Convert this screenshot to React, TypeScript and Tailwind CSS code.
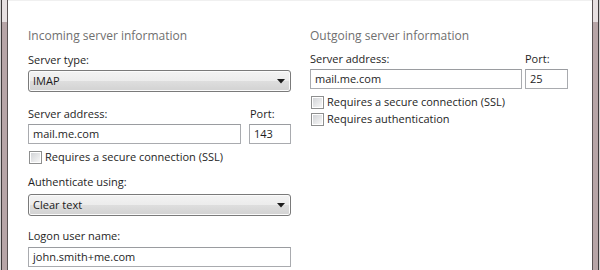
import React from "react";

const font = { fontFamily: '"Open Sans", "Noto Sans", sans-serif' };

function FrameLeft() {
  return (
    <div className="flex h-full w-[8px] shrink-0">
      <div className="w-[1px] h-full bg-[#d2d0d0]" />
      <div className="w-[1px] h-full bg-[#3f3a3b]" />
      <div className="w-[5px] h-full flex flex-col">
        <div className="h-[22px] bg-[#e7e0e1]" />
        <div className="flex-1 bg-[#b7a5a7]" />
      </div>
      <div className="w-[1px] h-full bg-[#5a5253]" />
    </div>
  );
}

function FrameRight() {
  return (
    <div className="flex h-full w-[8px] shrink-0">
      <div className="w-[1px] h-full bg-[#5a5253]" />
      <div className="w-[5px] h-full flex flex-col">
        <div className="h-[22px] bg-[#e7e0e1]" />
        <div className="flex-1 bg-[#b7a5a7]" />
      </div>
      <div className="w-[1px] h-full bg-[#3f3a3b]" />
      <div className="w-[1px] h-full bg-[#d2d0d0]" />
    </div>
  );
}

function Label({ children, className = "" }: { children: React.ReactNode; className?: string }) {
  return (
    <div className={`h-[16px] leading-[16px] text-[11px] text-[#1e1e1e] whitespace-nowrap ${className}`}>
      {children}
    </div>
  );
}

function Heading({ children }: { children: React.ReactNode }) {
  return (
    <div className="h-[16px] leading-[16px] text-[12px] text-[#6f6f6f] whitespace-nowrap">{children}</div>
  );
}

function TextBox({ value, className = "" }: { value: string; className?: string }) {
  return (
    <div
      className={`h-[20px] border border-[#a9abaf] border-t-[#9a9ca0] bg-white pl-[4px] flex items-center text-[11px] text-[#1e1e1e] whitespace-nowrap ${className}`}
    >
      {value}
    </div>
  );
}

function Select({ value }: { value: string }) {
  return (
    <div className="h-[22px] w-full rounded-[3px] border border-[#7a7a7a] bg-[linear-gradient(#f3f3f3_0%,#ececec_50%,#dedede_50%,#d2d2d2_100%)] shadow-[inset_0_0_0_1px_#fbfbfb] flex items-center justify-between pl-[4px] pr-[5px] text-[11px] text-[#1a1a1a]">
      <span>{value}</span>
      <svg width="8" height="5" viewBox="0 0 8 5">
        <polygon points="0,0 8,0 4,4.5" fill="#1c1c1c" />
      </svg>
    </div>
  );
}

function Check({ label, className = "" }: { label: string; className?: string }) {
  return (
    <div className={`h-[14px] flex items-center ${className}`}>
      <div className="w-[13px] h-[13px] border border-[#8e8f8f] bg-white p-[1px] ml-[1px]">
        <div className="w-full h-full bg-[linear-gradient(135deg,#d2d4d7,#f7f7f7)]" />
      </div>
      <span className="ml-[3px] text-[11px] leading-[14px] text-[#1e1e1e] whitespace-nowrap">{label}</span>
    </div>
  );
}

export default function App() {
  return (
    <div className="w-[600px] h-[270px] flex bg-white overflow-hidden" style={font}>
      <FrameLeft />
      <div className="flex-1 h-full border-t border-t-[#f0f0f0] pl-[20px] pt-[27px] flex">
        {/* Incoming */}
        <div className="w-[263px] flex flex-col">
          <Heading>Incoming server information</Heading>
          <Label className="mt-[8px]">Server type:</Label>
          <div className="mt-[2px]">
            <Select value="IMAP" />
          </div>
          <div className="mt-[14px] flex">
            <Label className="w-[222px]">Server address:</Label>
            <Label>Port:</Label>
          </div>
          <div className="mt-[2px] flex">
            <TextBox value="mail.me.com" className="w-[213px]" />
            <TextBox value="143" className="w-[42px] ml-[8px]" />
          </div>
          <Check className="mt-[6px]" label="Requires a secure connection (SSL)" />
          <Label className="mt-[10px]">Authenticate using:</Label>
          <div className="mt-[4px]">
            <Select value="Clear text" />
          </div>
          <Label className="mt-[12px]">Logon user name:</Label>
          <TextBox value="john.smith+me.com" className="mt-[3px] w-[263px]" />
        </div>
        {/* Outgoing */}
        <div className="w-[258px] ml-[19px] flex flex-col">
          <Heading>Outgoing server information</Heading>
          <div className="mt-[7px] flex">
            <Label className="w-[215px]">Server address:</Label>
            <Label>Port:</Label>
          </div>
          <div className="mt-[2px] flex">
            <TextBox value="mail.me.com" className="w-[212px]" />
            <TextBox value="25" className="w-[43px] ml-[3px]" />
          </div>
          <Check className="mt-[6px]" label="Requires a secure connection (SSL)" />
          <Check className="mt-[3px]" label="Requires authentication" />
        </div>
      </div>
      <FrameRight />
    </div>
  );
}
